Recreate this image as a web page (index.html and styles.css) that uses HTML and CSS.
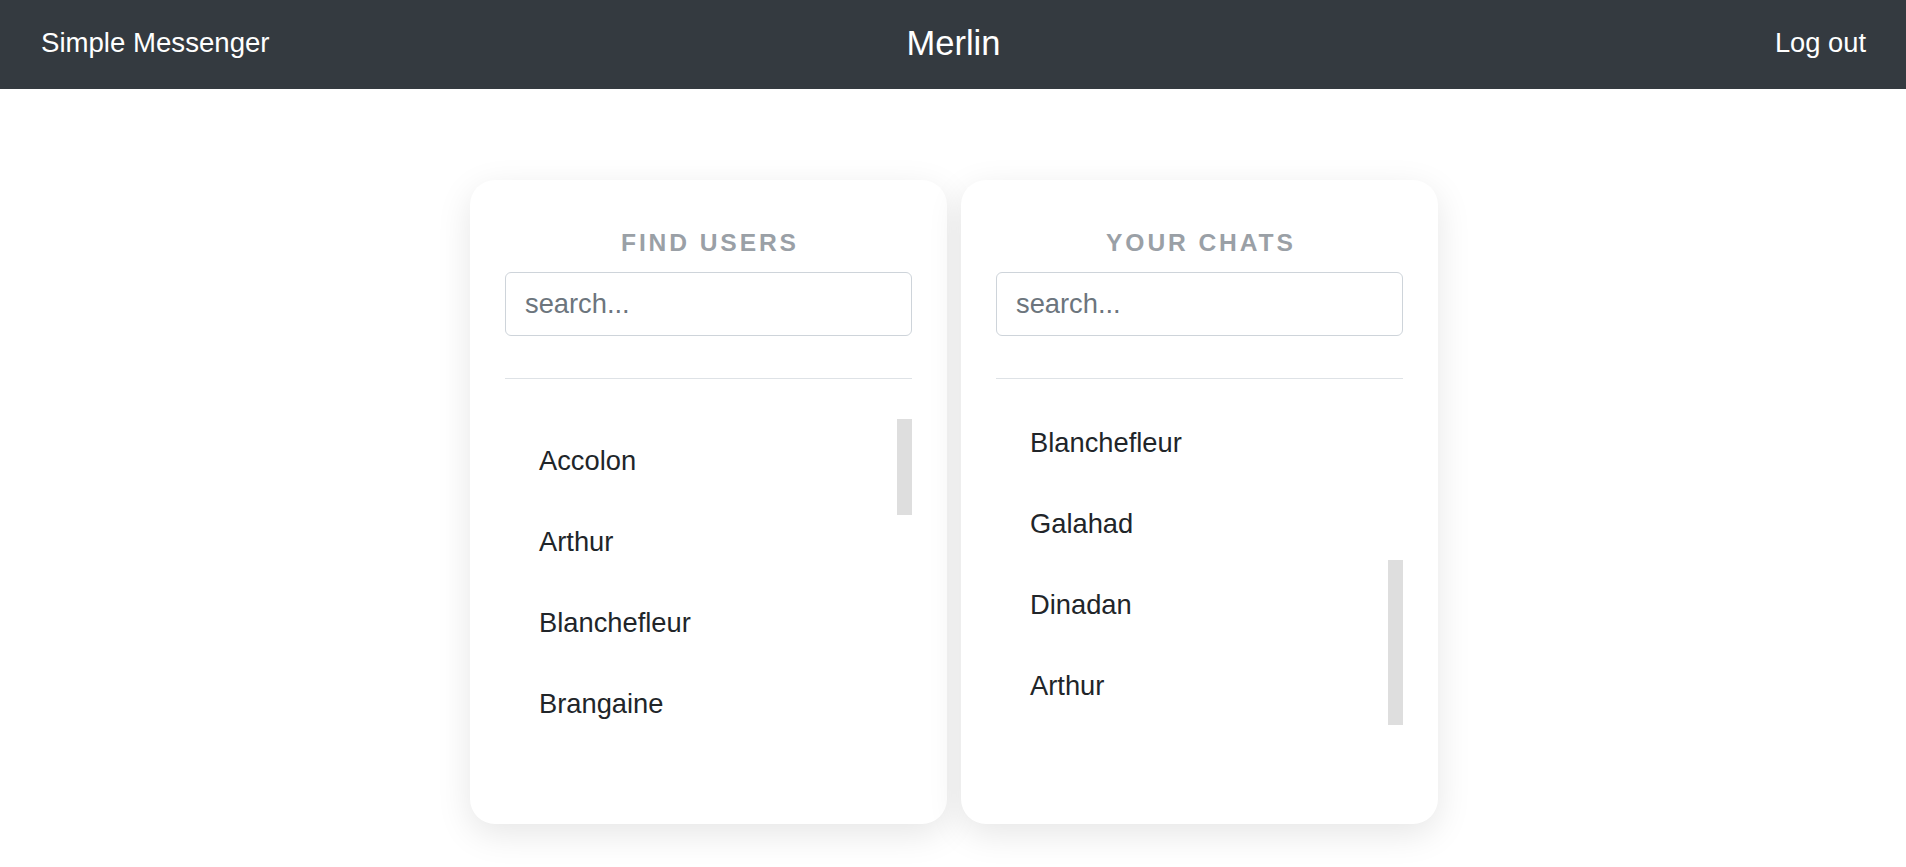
FILE: index.html
```html
<!DOCTYPE html>
<html lang="en">
<head>
<meta charset="utf-8">
<title>Simple Messenger</title>
<link rel="stylesheet" href="styles.css">
</head>
<body>
<nav class="navbar">
  <a class="brand" href="#">Simple Messenger</a>
  <span class="title">Merlin</span>
  <a class="logout" href="#">Log out</a>
</nav>
<main class="panels">
  <section class="card">
    <h2 class="card-title">Find users</h2>
    <input class="search" type="text" placeholder="search...">
    <hr class="divider">
    <div class="list-wrap">
      <ul class="list">
        <li class="list-item">Accolon</li>
        <li class="list-item">Arthur</li>
        <li class="list-item">Blanchefleur</li>
        <li class="list-item">Brangaine</li>
        <li class="list-item">Dinadan</li>
        <li class="list-item">Galahad</li>
        <li class="list-item">Gawain</li>
        <li class="list-item">Guinevere</li>
        <li class="list-item">Lancelot</li>
        <li class="list-item">Morgan</li>
        <li class="list-item">Percival</li>
        <li class="list-item">Tristan</li>
      </ul>
      <div class="thumb"></div>
    </div>
  </section>
  <section class="card">
    <h2 class="card-title">Your chats</h2>
    <input class="search" type="text" placeholder="search...">
    <hr class="divider">
    <div class="list-wrap">
      <ul class="list scroll-bottom">
        <li class="list-item">Gawain</li>
        <li class="list-item">Lancelot</li>
        <li class="list-item">Guinevere</li>
        <li class="list-item">Blanchefleur</li>
        <li class="list-item">Galahad</li>
        <li class="list-item">Dinadan</li>
        <li class="list-item">Arthur</li>
      </ul>
      <div class="thumb"></div>
    </div>
  </section>
</main>
<script src="script.js"></script>
</body>
</html>
```

FILE: styles.css
```css
* {
  box-sizing: border-box;
}

html,
body {
  min-height: 100%;
}

body {
  margin: 0;
  min-height: 100vh;
  font-family: "Liberation Sans", Arial, sans-serif;
  background: #fff;
  color: #212529;
}

.navbar {
  height: 89px;
  background: #343a40;
  display: grid;
  grid-template-columns: 1fr auto 1fr;
  align-items: center;
  padding: 0 40px 3px 41px;
}

.brand {
  justify-self: start;
  font-size: 27.6px;
  color: #fff;
  text-decoration: none;
}

.title {
  font-size: 34.5px;
  color: #fff;
}

.logout {
  justify-self: end;
  font-size: 27.3px;
  color: #fff;
  text-decoration: none;
}

.panels {
  display: flex;
  justify-content: center;
  gap: 14px;
  margin-top: 91px;
  padding: 0 0 43px 2px;
}

.card {
  width: 477px;
  background: #fff;
  border-radius: 25px;
  box-shadow: 0 10px 35px rgba(0, 0, 0, 0.1);
  padding: 48px 35px 99px;
  display: flex;
  flex-direction: column;
}

.card-title {
  margin: 0 0 14px;
  padding-left: 2.9px;
  font-size: 24.6px;
  line-height: 30px;
  font-weight: 700;
  letter-spacing: 2.9px;
  color: #9aa0a6;
  text-align: center;
  text-transform: uppercase;
}

.search {
  display: block;
  width: 100%;
  height: 64px;
  border: 1px solid #ced4da;
  border-radius: 6px;
  padding: 0 19px;
  font-family: inherit;
  font-size: 27.3px;
  color: #495057;
  background: #fff;
  outline: none;
}

.search::placeholder {
  color: #6c757d;
}

.divider {
  height: 0;
  border: 0;
  border-top: 1px solid #dee2e6;
  margin: 42px 0 40px;
}

.list-wrap {
  position: relative;
  height: 306px;
}

.list {
  list-style: none;
  margin: 0;
  padding: 0;
  height: 100%;
  overflow-y: auto;
  scrollbar-width: none;
}

.list::-webkit-scrollbar {
  display: none;
}

.thumb {
  position: absolute;
  right: 0;
  top: 0;
  width: 15px;
  height: 0;
  background: #dedede;
}

.list-item {
  font-size: 27.3px;
  line-height: 41px;
  padding: 21px 33px 19px 34px;
}
```

FILE: script.js
```js
document.querySelectorAll('.scroll-bottom').forEach(function (el) {
  el.scrollTop = el.scrollHeight;
});

document.querySelectorAll('.list-wrap').forEach(function (wrap) {
  var list = wrap.querySelector('.list');
  var thumb = wrap.querySelector('.thumb');
  var view = list.clientHeight;
  var total = list.scrollHeight;
  if (total <= view) {
    thumb.style.display = 'none';
    return;
  }
  var h = view * view / total;
  var top = (list.scrollTop / (total - view)) * (view - h);
  thumb.style.height = h + 'px';
  thumb.style.top = top + 'px';
});
```
